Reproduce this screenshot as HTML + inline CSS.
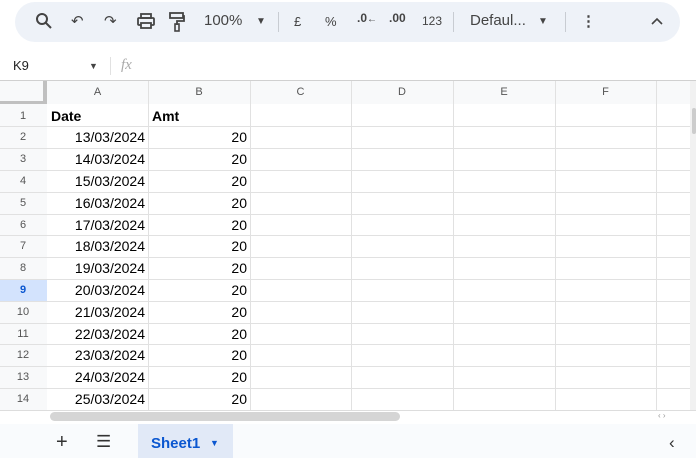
<!DOCTYPE html><html><head><style>
body{margin:0;width:696px;height:458px;overflow:hidden;background:#fff;font-family:"Liberation Sans",Arial,sans-serif;position:relative}
.a{position:absolute}
.tb{left:15px;top:2px;width:665px;height:40px;background:#eef2f8;border-radius:20px}
.ti{position:absolute;top:12px;font-size:15px;color:#444}
.g{position:absolute;background:#e1e1e1}
.cell{position:absolute;font-size:14px;color:#000;height:22px;line-height:22px}
.rh{position:absolute;left:0;width:46px;text-align:center;font-size:11px;color:#555}
.ch{position:absolute;top:81px;height:23px;line-height:23px;text-align:center;font-size:11px;color:#555}
</style></head><body>
<div class="a tb"></div>
<svg class="a" style="left:35px;top:12px" width="18" height="18" viewBox="0 0 18 18"><circle cx="7" cy="7" r="5" fill="none" stroke="#444" stroke-width="2"/><path d="M11 11l5 5" stroke="#444" stroke-width="2"/></svg>
<div class="ti" style="left:71px">↶</div>
<div class="ti" style="left:104px">↷</div>
<svg class="a" style="left:137px;top:13px" width="18" height="16" viewBox="0 0 18 16"><rect x="4" y="1" width="10" height="4" fill="none" stroke="#444" stroke-width="1.8"/><rect x="1" y="5" width="16" height="7" rx="1" fill="none" stroke="#444" stroke-width="1.8"/><rect x="4" y="10" width="10" height="5" fill="#eef2f8" stroke="#444" stroke-width="1.8"/></svg>
<svg class="a" style="left:169px;top:12px" width="16" height="20" viewBox="0 0 16 20"><rect x="1" y="1" width="13" height="5" fill="none" stroke="#444" stroke-width="1.8"/><path d="M14 4h1v5H8v4" fill="none" stroke="#444" stroke-width="1.8"/><rect x="6" y="12" width="4" height="7" fill="none" stroke="#444" stroke-width="1.6"/></svg>
<div class="ti" style="left:204px">100%</div>
<div class="ti" style="left:256px;font-size:10px;top:16px">▼</div>
<div class="g" style="left:278px;top:12px;width:1px;height:20px;background:#c8ccd2"></div>
<div class="ti" style="left:294px;font-size:13px;top:14px">£</div>
<div class="ti" style="left:325px;font-size:13px;top:14px">%</div>
<div class="ti" style="left:357px;font-size:12px;top:11px;font-weight:bold">.0<span style="font-size:10px">←</span></div>
<div class="ti" style="left:389px;font-size:12px;top:11px;font-weight:bold">.00<span style="font-size:10px"></span></div>
<div class="ti" style="left:422px;font-size:12px;top:14px">123</div>
<div class="g" style="left:453px;top:12px;width:1px;height:20px;background:#c8ccd2"></div>
<div class="ti" style="left:470px">Defaul...</div>
<div class="ti" style="left:538px;font-size:10px;top:16px">▼</div>
<div class="g" style="left:565px;top:12px;width:1px;height:20px;background:#c8ccd2"></div>
<div class="ti" style="left:581px;font-weight:bold">⋮</div>
<svg class="a" style="left:651px;top:17px" width="12" height="8"><path d="M1 7l5-5 5 5" fill="none" stroke="#444" stroke-width="1.6"/></svg>
<div class="a" style="left:13px;top:58px;font-size:13px;color:#222">K9</div>
<div class="a" style="left:89px;top:61px;font-size:9px;color:#444">▼</div>
<div class="g" style="left:110px;top:57px;width:1px;height:18px"></div>
<div class="a" style="left:121px;top:57px;font-size:15px;color:#aaa;font-style:italic;font-family:'Liberation Serif',serif">fx</div>
<div class="g" style="left:0;top:80px;width:696px;height:1px;background:#d0d0d0"></div>
<div class="a" style="left:0;top:81px;width:47px;height:23px;background:#f8f9fa"></div>
<div class="a" style="left:0;top:81px;width:46px;height:22px;border-right:4px solid #c0c0c0;border-bottom:4px solid #c0c0c0;box-sizing:border-box;width:47px;height:24px"></div>
<div class="a" style="left:47px;top:81px;width:649px;height:23px;background:#f8f9fa"></div>
<div class="a" style="left:0;top:104px;width:47px;height:306px;background:#f8f9fa"></div>
<div class="a" style="left:0;top:279px;width:47px;height:22px;background:#d3e3fd"></div>
<div id="grid"></div>
<div class="a" style="left:690px;top:81px;width:6px;height:330px;background:#f1f1f1"></div>
<div class="a" style="left:692px;top:108px;width:4px;height:26px;background:#ccc;border-radius:2px"></div>
<div class="a" style="left:0;top:410px;width:696px;height:14px;background:#fff;border-top:1px solid #ddd"></div>
<div class="a" style="left:50px;top:412px;width:350px;height:9px;background:#d5d5d5;border-radius:5px"></div>
<div class="a" style="left:658px;top:411px;font-size:8px;color:#999">‹ ›</div>
<div class="a" style="left:0;top:424px;width:696px;height:34px;background:#f9fbfd"></div>
<div class="a" style="left:56px;top:431px;font-size:20px;color:#333">+</div>
<div class="a" style="left:96px;top:432px;font-size:17px;color:#333">☰</div>
<div class="a" style="left:138px;top:424px;width:95px;height:34px;background:#e1e9f7"></div>
<div class="a" style="left:151px;top:435px;font-size:15px;color:#0b57d0;font-weight:bold">Sheet1</div>
<div class="a" style="left:210px;top:438px;font-size:9px;color:#0b57d0">▼</div>
<div class="a" style="left:669px;top:433px;font-size:17px;color:#333">‹</div>
<script>
var g=document.getElementById('grid'),h='';
var cols=[47,148,250,351,453,555,656,690],L='ABCDEF';
for(var i=0;i<6;i++)h+='<div class="ch" style="left:'+cols[i]+'px;width:'+(cols[i+1]-cols[i])+'px">'+L[i]+'</div>';
for(var i=1;i<cols.length;i++)h+='<div class="g" style="left:'+cols[i]+'px;top:81px;width:1px;height:329px"></div>';
var y0=104.5,rh=21.8;
for(var r=0;r<14;r++){var y=y0+r*rh;
h+='<div class="g" style="left:0;top:'+Math.round(y+rh)+'px;width:690px;height:1px"></div>';
h+='<div class="rh" style="top:'+Math.round(y+5)+'px;'+(r==8?'font-weight:bold;color:#0b57d0':'')+'">'+(r+1)+'</div>';
if(r==0){h+='<div class="cell" style="left:51px;top:'+Math.round(y)+'px;font-weight:bold">Date</div><div class="cell" style="left:152px;top:'+Math.round(y)+'px;font-weight:bold">Amt</div>';}
else{var d=(12+r);h+='<div class="cell" style="left:47px;width:98px;text-align:right;top:'+Math.round(y)+'px">'+d+'/03/2024</div><div class="cell" style="left:148px;width:99px;text-align:right;top:'+Math.round(y)+'px">20</div>';}
}
g.innerHTML=h;
</script>
</body></html>
